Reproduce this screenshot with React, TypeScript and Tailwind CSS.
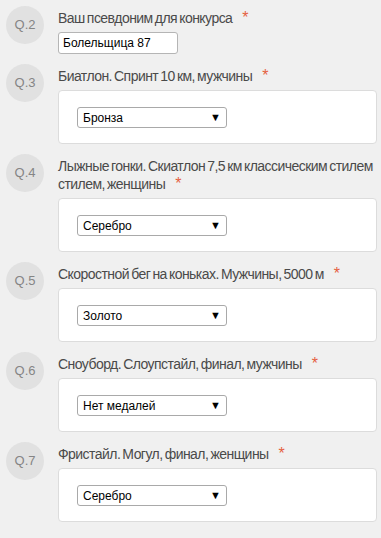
const questions = [
  { n: "Q.3", title: "Биатлон. Спринт 10 км, мужчины", value: "Бронза" },
  { n: "Q.4", title: "Лыжные гонки. Скиатлон 7,5 км классическим стилем стилем, женщины", value: "Серебро" },
  { n: "Q.5", title: "Скоростной бег на коньках. Мужчины, 5000 м", value: "Золото" },
  { n: "Q.6", title: "Сноуборд. Слоупстайл, финал, мужчины", value: "Нет медалей" },
  { n: "Q.7", title: "Фристайл. Могул, финал, женщины", value: "Серебро" },
];

function Badge({ n }: { n: string }) {
  return (
    <div className="ml-[6px] flex h-[38px] w-[38px] shrink-0 items-center justify-center rounded-full bg-[#e1e1e1] text-[13px] text-[#858585]">
      {n}
    </div>
  );
}

function Title({ text }: { text: string }) {
  return (
    <div className="mt-[3px] mb-[5px] text-[14px] leading-[18px] tracking-[-0.55px] [word-spacing:-1.2px] text-[#4a4a4a]">
      {text}
      <span className="ml-[10px] inline-block align-top text-[16px] leading-[18px] text-[#e5603f]">*</span>
    </div>
  );
}

function Question({ n, title, value }: { n: string; title: string; value: string }) {
  return (
    <div className="flex">
      <Badge n={n} />
      <div className="ml-[14px] flex-1">
        <Title text={title} />
        <div className="h-[54px] rounded-[4px] border border-[#dcdcdc] bg-white pl-[18px] pt-[16px]">
          <div className="flex h-[21px] w-[150px] items-center justify-between rounded-[3px] border border-[#a9a9a9] bg-white pl-[5px] pr-[5px] text-[12px] text-black">
            <span>{value}</span>
            <span className="text-[11px] leading-none">▼</span>
          </div>
        </div>
      </div>
    </div>
  );
}

export default function App() {
  return (
    <div className="min-h-[538px] bg-[#f0f0f0] pt-[6px] pr-[4px] font-['Liberation_Sans',Arial,sans-serif]">
      <div className="flex flex-col gap-[10px]">
        <div className="flex">
          <Badge n="Q.2" />
          <div className="ml-[14px] flex-1">
            <Title text="Ваш псевдоним для конкурса" />
            <div className="flex h-[22px] w-[120px] items-center rounded-[3px] border border-[#b5b5b5] bg-white pl-[4px] text-[12px] text-black">
              Болельщица 87
            </div>
          </div>
        </div>
        {questions.map((q) => (
          <Question key={q.n} {...q} />
        ))}
      </div>
    </div>
  );
}
